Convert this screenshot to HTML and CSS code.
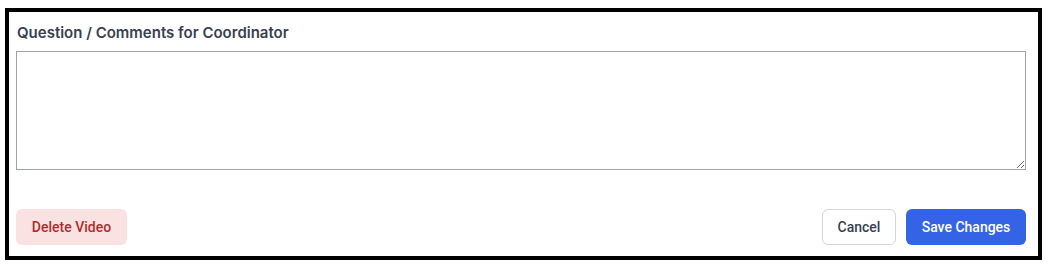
FILE: index.html
```html
<!DOCTYPE html>
<html>
<head>
<meta charset="utf-8">
<link rel="stylesheet" href="styles.css">
</head>
<body>
<div class="frame">
  <label class="label" for="comments">Question / Comments for Coordinator</label>
  <textarea id="comments" class="textarea"></textarea>
  <div class="actions">
    <button class="btn btn-delete">Delete Video</button>
    <div class="right">
      <button class="btn btn-cancel">Cancel</button>
      <button class="btn btn-save">Save Changes</button>
    </div>
  </div>
</div>
</body>
</html>
```

FILE: styles.css
```css
* { box-sizing: border-box; }
html, body { margin: 0; padding: 0; background: #ffffff; }
body {
  font-family: Inter, "Liberation Sans", Arial, sans-serif;
  color: #374151;
}
.frame {
  margin: 8px 0 0 5px;
  width: 1037px;
  height: 252px;
  border: 4px solid #000000;
  padding: 11px 12px 11px 7px;
  display: flex;
  flex-direction: column;
}
.label {
  display: block;
  font-size: 15px;
  line-height: 20px;
  font-weight: 600;
  color: #374151;
  padding-left: 1px;
  margin-bottom: 8px;
  white-space: nowrap;
}
.textarea {
  display: block;
  width: 1010px;
  height: 119px;
  border: 1px solid #9ca3af;
  border-radius: 0;
  margin: 0;
  padding: 8px;
  font: inherit;
  resize: vertical;
}
.actions {
  margin-top: auto;
  display: flex;
  justify-content: space-between;
  align-items: center;
}
.right {
  display: flex;
  gap: 10px;
}
.btn {
  height: 36px;
  font-family: Roboto, "Liberation Sans", Arial, sans-serif;
  font-size: 14px;
  font-weight: 500;
  border-radius: 6px;
  padding: 0;
  border: 1px solid transparent;
  white-space: nowrap;
  text-align: center;
  cursor: pointer;
}
.btn-delete {
  width: 111px;
  background: #fbe2e2;
  color: #ad2d2d;
}
.btn-cancel {
  width: 74px;
  background: #ffffff;
  border-color: #d1d5db;
  color: #374151;
}
.btn-save {
  width: 120px;
  background: #3563e6;
  color: #ffffff;
}
```
